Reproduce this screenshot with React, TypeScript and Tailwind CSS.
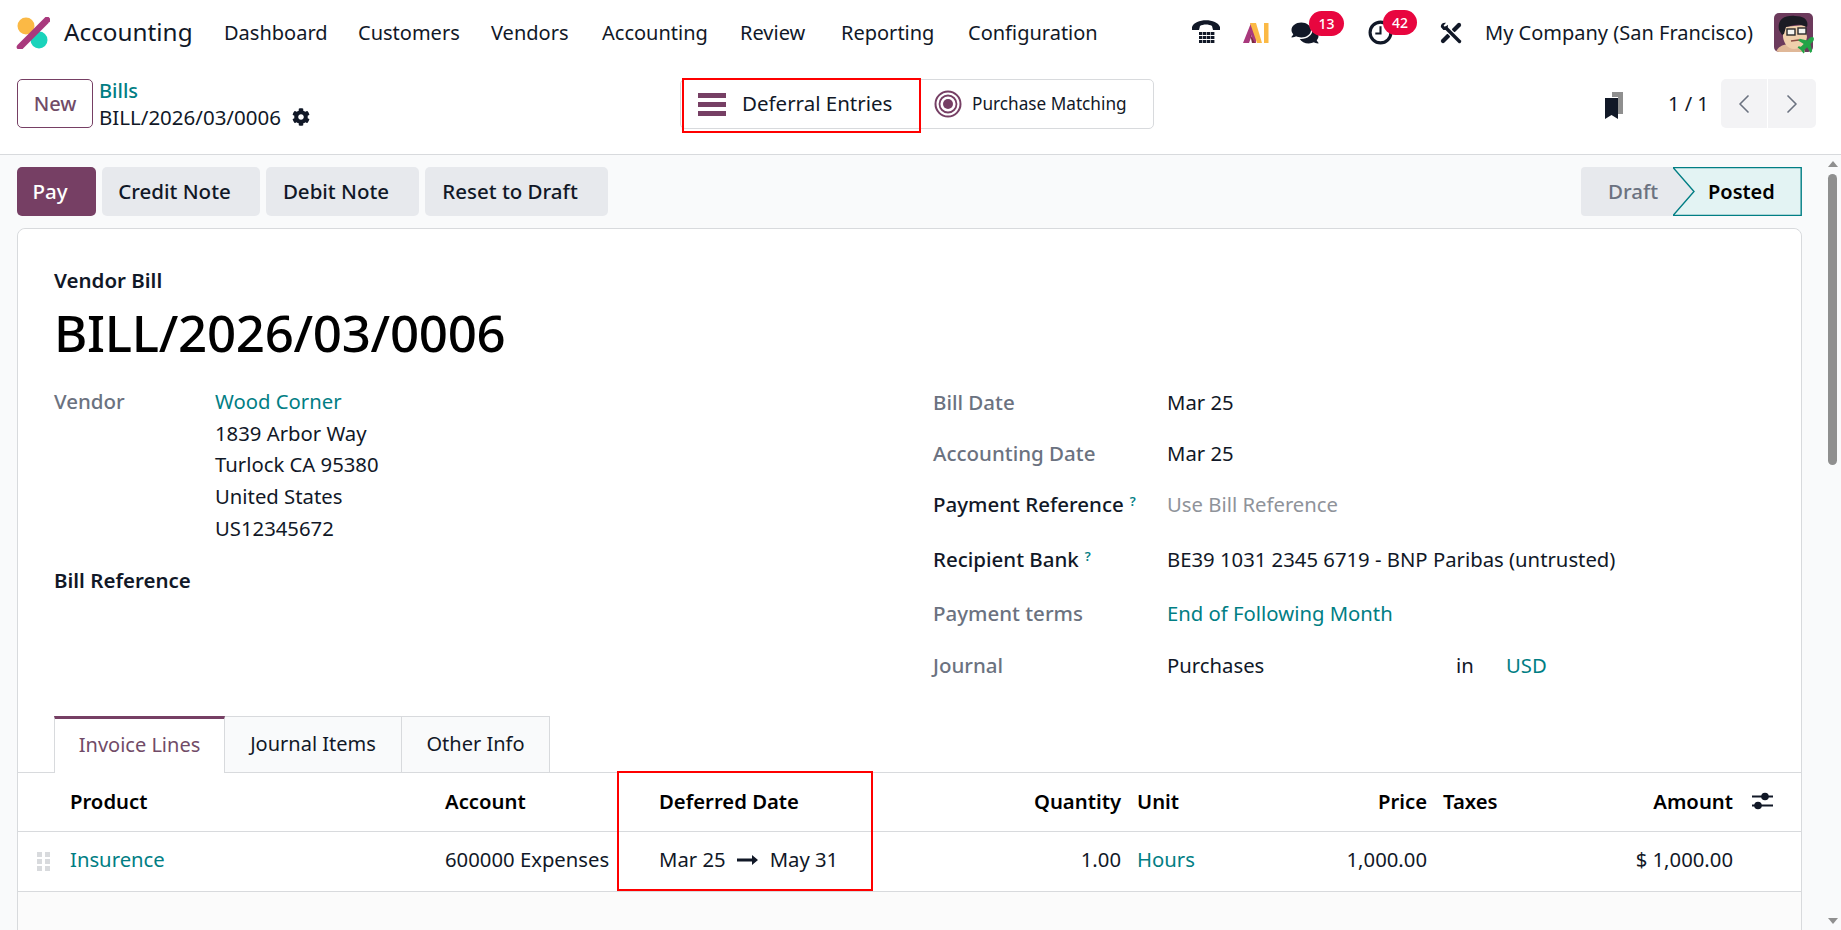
import { FaCog, FaComments } from "react-icons/fa";
import { ChevronLeft, ChevronRight } from "lucide-react";

const navItems = [
  { label: "Dashboard", width: "w-[134px]" },
  { label: "Customers", width: "w-[133px]" },
  { label: "Vendors", width: "w-[111px]" },
  { label: "Accounting", width: "w-[138px]" },
  { label: "Review", width: "w-[101px]" },
  { label: "Reporting", width: "w-[127px]" },
  { label: "Configuration", width: "w-[131px]" },
];

function Logo() {
  return (
    <svg viewBox="0 0 34 32" className="h-[32px] w-[34px]">
      <circle cx="10" cy="9" r="8.5" fill="#fbb945" />
      <circle cx="23" cy="23" r="8.5" fill="#1ad3bb" />
      <path d="M31 3 L4 30" stroke="#a9397d" strokeWidth="6.5" strokeLinecap="round" />
    </svg>
  );
}

function PhoneIcon() {
  return (
    <svg viewBox="0 0 28 25" className="h-[25px] w-[28px]" fill="#111827">
      <path d="M0 7 C3 -2 25 -2 28 7 L28 10 L21 10 L20 6 C17 4 11 4 8 6 L7 10 L0 10 Z" />
      {[8, 12, 16, 20].map((x) =>
        [12, 16, 20].map((y) => <rect key={`${x}-${y}`} x={x - 1} y={y} width="3.4" height="3" />),
      )}
    </svg>
  );
}

function AiIcon() {
  return (
    <svg viewBox="0 0 26 21" className="h-[21px] w-[26px]">
      <path d="M0 21 L8 1 L13 1 L13 21 L9 21 L9 13 L6 21 Z" fill="#a9397d" />
      <path d="M7 1 L13 1 L19 21 L14 21 Z" fill="#fbb945" />
      <path d="M7 12 L12 21 L9 21 Z" fill="#7a2a3d" />
      <rect x="21" y="1" width="4.5" height="20" fill="#fbb945" />
    </svg>
  );
}

function ToolsIcon() {
  return (
    <svg viewBox="0 0 22 22" className="h-[22px] w-[22px]" fill="none" strokeLinecap="round">
      <path d="M19 3 L14 8" stroke="#111827" strokeWidth="4.2" />
      <path d="M8 14 L3 19" stroke="#111827" strokeWidth="4.2" />
      <path d="M6 6 L19.5 19.5" stroke="#fff" strokeWidth="6" />
      <path d="M6 6 L19.5 19.5" stroke="#111827" strokeWidth="3.4" />
      <path d="M0.8 5 C0.6 2 3 0.4 6 0.8 L3.6 3.4 L5 5 L7.8 2.8 C8.4 6 6.4 8.6 3.4 8 Z" fill="#111827" />
    </svg>
  );
}

function Avatar() {
  return (
    <div className="relative h-[39px] w-[39px]">
      <svg viewBox="0 0 39 39" className="h-[39px] w-[39px] rounded-[5px]">
        <rect width="39" height="39" fill="#6c3a5c" />
        <path d="M2 39 C4 33 10 31 18 31 C26 31 30 34 31 39 Z" fill="#e0b898" />
        <path d="M9 14 L31 12 L33 24 C32 32 26 36 20 36 C14 36 10 31 9 24 Z" fill="#f0d0ac" />
        <path d="M5 17 C3 7 10 2 21 3 C30 3 35 7 33 14 L30 13 C24 10 16 13 12 14 L10 21 L8 22 Z" fill="#1c1c24" />
        <rect x="13" y="16" width="8" height="6" fill="#f5f5f0" stroke="#2a2a2a" strokeWidth="1.4" />
        <rect x="24" y="15" width="8" height="6" fill="#f5f5f0" stroke="#2a2a2a" strokeWidth="1.4" />
        <path d="M17 28 L25 27" stroke="#8a4a42" strokeWidth="1.5" />
      </svg>
      <svg viewBox="0 0 16 16" className="absolute bottom-[-2px] right-[-2px] h-[18px] w-[18px]" fill="#22a447">
        <path d="M14.5 1 C13.5 0.5 12 1 11 2 L9 4 L2.5 2.5 L1 4 L6 7 L3.5 9.5 L1.5 9.2 L0.5 10.2 L3.5 12.5 L5.8 15.5 L6.8 14.5 L6.5 12.5 L9 10 L12 15 L13.5 13.5 L12 7 L14 5 C15 4 15.5 2 14.5 1 Z" />
      </svg>
    </div>
  );
}

function Badge({ n }: { n: number }) {
  return (
    <span className="absolute left-[18px] top-[-10px] flex h-[25px] w-[35px] items-center justify-center rounded-full bg-[#e8063f] text-[14px] font-medium text-white">
      {n}
    </span>
  );
}

function NavBar() {
  return (
    <div className="flex h-[65px] items-center bg-white">
      <div className="ml-[16px] w-[48px]">
        <Logo />
      </div>
      <span className="w-[160px] text-[24.3px] text-[#111827]">Accounting</span>
      {navItems.map((item) => (
        <span key={item.label} className={`${item.width} whitespace-nowrap text-[20px] text-[#111827]`}>
          {item.label}
        </span>
      ))}
      <div className="ml-[93px] w-[51px]">
        <PhoneIcon />
      </div>
      <div className="w-[48px]">
        <AiIcon />
      </div>
      <div className="relative w-[77px]">
        <FaComments className="h-[24px] w-[28px] text-[#111827]" />
        <Badge n={13} />
      </div>
      <div className="relative w-[72px]">
        <svg viewBox="0 0 24 24" className="h-[25px] w-[25px]" fill="none" stroke="#111827" strokeWidth="3">
          <circle cx="12" cy="12" r="10" />
          <path d="M12 6 V13 H7" strokeWidth="2" />
        </svg>
        <span className="absolute left-[15px] top-[-10px] flex h-[25px] w-[34px] items-center justify-center rounded-full bg-[#e8063f] text-[14px] font-medium text-white">
          42
        </span>
      </div>
      <div className="w-[45px]">
        <ToolsIcon />
      </div>
      <span className="w-[289px] whitespace-nowrap text-[20px] text-[#111827]">My Company (San Francisco)</span>
      <Avatar />
    </div>
  );
}

function ControlPanel() {
  return (
    <div className="flex h-[90px] items-start border-b border-[#d8dadd] bg-white pt-[14px]">
      <button className="ml-[17px] h-[49px] w-[76px] rounded-[5px] border border-[#763f64] text-[20px] font-medium text-[#714b67]">
        New
      </button>
      <div className="ml-[6px] mt-[-1px] w-[581px] leading-[26px]">
        <div className="text-[20px] font-medium text-[#017e84]">Bills</div>
        <div className="flex items-center gap-[11px] text-[20.5px] text-[#111827]">
          BILL/2026/03/0006
          <FaCog className="h-[18px] w-[18px]" />
        </div>
      </div>
      <div className="flex h-[50px] w-[474px] rounded-[5px] border border-[#d8dadd] text-[#111827]">
        <div className="relative flex w-[240px] items-center">
          <div className="ml-[17px] flex w-[44px] flex-col gap-[4px]">
            <div className="h-[5px] w-[28px] bg-[#763f64]" />
            <div className="h-[5px] w-[28px] bg-[#763f64]" />
            <div className="h-[5px] w-[28px] bg-[#763f64]" />
          </div>
          <span className="pb-[2px] text-[20.5px]">Deferral Entries</span>
          <div className="absolute left-[1px] right-[0px] top-[-2px] bottom-[-5px] border-2 border-[#ff0000]" />
        </div>
        <div className="flex items-center">
          <svg viewBox="0 0 28 28" className="ml-[13px] h-[28px] w-[28px]" fill="none" stroke="#763f64">
            <circle cx="14" cy="14" r="12.5" strokeWidth="2" />
            <circle cx="14" cy="14" r="8.5" strokeWidth="1.8" />
            <circle cx="14" cy="14" r="5" fill="#763f64" stroke="none" />
          </svg>
          <span className="ml-[10px] text-[17.2px]">Purchase Matching</span>
        </div>
      </div>
      <svg viewBox="0 0 20 28" className="ml-[450px] mt-[13px] h-[28px] w-[20px]">
        <path d="M8 0 H19 V22 H14 V5 H8 Z" fill="#8f8f8f" />
        <path d="M1 6 H14 V27 L7.5 23 L1 27 Z" fill="#111827" />
      </svg>
      <span className="ml-[44px] mt-[10px] w-[53px] text-[20px] text-[#111827]">1 / 1</span>
      <div className="flex h-[49px] w-[95px] rounded-[5px] bg-[#f3f3f5] text-[#6b7280]">
        <div className="flex w-[47px] items-center justify-center border-r border-white">
          <ChevronLeft className="h-[32px] w-[32px]" strokeWidth={1.25} />
        </div>
        <div className="flex flex-1 items-center justify-center">
          <ChevronRight className="h-[32px] w-[32px]" strokeWidth={1.25} />
        </div>
      </div>
    </div>
  );
}

function ActionBar() {
  const gray = "h-[49px] rounded-[5px] bg-[#e7e9ed] pr-[13px] text-[20.5px] font-medium text-[#111827]";
  return (
    <div className="flex h-[73px] items-start pl-[17px] pr-[22px] pt-[12px]">
      <button className="h-[49px] w-[79px] rounded-[5px] bg-[#763f64] pr-[13px] text-[20.5px] font-medium text-white">Pay</button>
      <button className={`${gray} ml-[6px] w-[158px]`}>Credit Note</button>
      <button className={`${gray} ml-[6px] w-[153px]`}>Debit Note</button>
      <button className={`${gray} ml-[6px] w-[183px]`}>Reset to Draft</button>
      <div className="relative ml-auto flex h-[49px] w-[221px]">
        <div className="flex h-full w-[92px] items-center rounded-l-[4px] bg-[#e7e9ed] pl-[27px] text-[20.5px] font-medium text-[#6b7280]">
          Draft
        </div>
        <svg viewBox="0 0 129 49" className="h-[49px] w-[129px]">
          <path d="M0 0 H129 V49 H0 L21 24.5 Z" fill="#e3f3f3" />
          <path d="M0 0 L21 24.5 L0 49 Z" fill="#e7e9ed" />
          <path d="M0 0.5 H128.2 V48.5 H0 L21 24.5 Z" fill="none" stroke="#017e84" strokeWidth="1.4" />
        </svg>
        <span className="absolute left-[127px] top-[10px] text-[20px] font-semibold text-black">Posted</span>
      </div>
    </div>
  );
}

function FieldRow({ label, h, strong, help, children }: { label: string; h: string; strong?: boolean; help?: boolean; children: React.ReactNode }) {
  return (
    <div className={`flex ${h} items-start`}>
      <div className={`w-[234px] text-[20.5px] ${strong ? "font-medium text-[#111827]" : "font-medium text-[#6b7280]"}`}>
        {label}
        {help && <sup className="ml-[6px] text-[13px] font-semibold text-[#017e84]">?</sup>}
      </div>
      <div className="text-[20.3px] text-[#111827]">{children}</div>
    </div>
  );
}

function FormHead() {
  return (
    <div className="pl-[36px] pt-[37px]">
      <div className="text-[20.5px] font-semibold leading-[28px] text-[#111827]">Vendor Bill</div>
      <div className="mt-[5px] text-[51px] font-medium leading-[66px] tracking-[-0.3px] text-black">BILL/2026/03/0006</div>
      <div className="mt-[21px] grid h-[330px] grid-cols-[879px_1fr] leading-[28px] text-[#111827]">
        <div>
          <div className="flex">
            <div className="w-[161px] text-[20.5px] font-medium leading-[31.7px] text-[#6b7280]">Vendor</div>
            <div className="text-[20.3px] leading-[31.7px]">
              <div className="text-[#017e84]">Wood Corner</div>
              <div>1839 Arbor Way</div>
              <div>Turlock CA 95380</div>
              <div>United States</div>
              <div>US12345672</div>
            </div>
          </div>
          <div className="mt-[21px] text-[20.5px] font-semibold">Bill Reference</div>
        </div>
        <div className="pt-[2px]">
          <FieldRow label="Bill Date" h="h-[51px]">Mar 25</FieldRow>
          <FieldRow label="Accounting Date" h="h-[51px]">Mar 25</FieldRow>
          <FieldRow label="Payment Reference" h="h-[55px]" strong help>
            <span className="text-[#8f939a]">Use Bill Reference</span>
          </FieldRow>
          <FieldRow label="Recipient Bank" h="h-[54px]" strong help>BE39 1031 2345 6719 - BNP Paribas (untrusted)</FieldRow>
          <FieldRow label="Payment terms" h="h-[52px]">
            <span className="text-[#017e84]">End of Following Month</span>
          </FieldRow>
          <FieldRow label="Journal" h="h-[50px]">
            <div className="flex">
              <span className="w-[289px]">Purchases</span>
              <span className="w-[50px]">in</span>
              <span className="text-[#017e84]">USD</span>
            </div>
          </FieldRow>
        </div>
      </div>
    </div>
  );
}

function Tabs() {
  const tab = "flex h-[56px] items-center justify-center border-r border-t border-[#d8dadd] bg-[#f9fafb] pb-[2px] text-[20px] text-[#111827]";
  return (
    <div className="flex h-[57px] border-b border-[#d8dadd] pl-[36px]">
      <div className="relative z-10 flex h-[57px] w-[171px] items-center justify-center border-x border-[#d8dadd] border-t-[3px] border-t-[#763f64] bg-white pb-[2px] text-[20px] text-[#714b67]">
        Invoice Lines
      </div>
      <div className={`${tab} w-[177px]`}>Journal Items</div>
      <div className={`${tab} w-[148px]`}>Other Info</div>
    </div>
  );
}

const tableCols = "grid grid-cols-[52px_375px_214px_262px_200px_16px_140px_150px_16px_130px_160px_1fr]";

function InvoiceTable() {
  return (
    <div className="relative">
      <div className={`${tableCols} h-[59px] items-center border-b border-[#d8dadd] pb-[2px] text-[20.3px] font-semibold text-black`}>
        <div />
        <div>Product</div>
        <div>Account</div>
        <div>Deferred Date</div>
        <div className="text-right">Quantity</div>
        <div />
        <div>Unit</div>
        <div className="text-right">Price</div>
        <div />
        <div>Taxes</div>
        <div className="text-right">Amount</div>
        <svg viewBox="0 0 21 18" className="ml-[19px] h-[18px] w-[21px]" fill="#111827">
          <rect x="0" y="3.5" width="21" height="2" />
          <circle cx="13" cy="4.5" r="3.8" />
          <rect x="0" y="12.5" width="21" height="2" />
          <circle cx="6" cy="13.5" r="3.8" />
        </svg>
      </div>
      <div className={`${tableCols} h-[60px] items-center border-b border-[#d8dadd] pb-[4px] text-[20.3px] text-[#111827]`}>
        <div className="ml-[19px] mt-[4px] grid w-[13px] grid-cols-2 gap-x-[3px] gap-y-[2px]">
          {[0, 1, 2, 3, 4, 5].map((i) => (
            <div key={i} className="h-[5px] w-[5px] bg-[#d8dadd]" />
          ))}
        </div>
        <div className="text-[#017e84]">Insurence</div>
        <div className="whitespace-nowrap">600000 Expenses</div>
        <div className="flex items-center">
          Mar 25
          <svg viewBox="0 0 21 10" className="ml-[11px] mr-[12px] h-[10px] w-[21px]" fill="#111827">
            <path d="M0 3.6 H15 V0 L21 5 L15 10 V6.4 H0 Z" />
          </svg>
          May 31
        </div>
        <div className="text-right">1.00</div>
        <div />
        <div className="text-[#017e84]">Hours</div>
        <div className="text-right">1,000.00</div>
        <div />
        <div />
        <div className="text-right">$ 1,000.00</div>
        <div />
      </div>
      {/* annotation box drawn over the deferred date column */}
      <div className="absolute left-[599px] top-[-2px] h-[120px] w-[256px] border-2 border-[#ff0000]" />
    </div>
  );
}

function ScrollBar() {
  return (
    <div className="flex w-[17px] flex-col items-center bg-[#f9fafb]">
      <div className="mt-[6px] h-0 w-0 border-x-[5px] border-b-[6px] border-x-transparent border-b-[#8f8f8f]" />
      <div className="mt-[7px] h-[291px] w-[9px] rounded-full bg-[#8f8f8f]" />
      <div className="mb-[6px] mt-auto h-0 w-0 border-x-[5px] border-t-[6px] border-x-transparent border-t-[#8f8f8f]" />
    </div>
  );
}

export default function App() {
  return (
    <div className="flex h-screen flex-col overflow-hidden bg-[#f9fafb] font-['Noto_Sans','Liberation_Sans',sans-serif]">
      <NavBar />
      <ControlPanel />
      <div className="flex min-h-0 flex-1">
        <div className="min-w-0 flex-1 overflow-hidden">
          <ActionBar />
          <div className="ml-[17px] mr-[22px] min-h-[800px] rounded-t-[8px] border border-[#d8dadd] bg-[#fbfbfb]">
            <div className="rounded-t-[8px] bg-white">
              <FormHead />
              <Tabs />
              <InvoiceTable />
            </div>
          </div>
        </div>
        <ScrollBar />
      </div>
    </div>
  );
}
